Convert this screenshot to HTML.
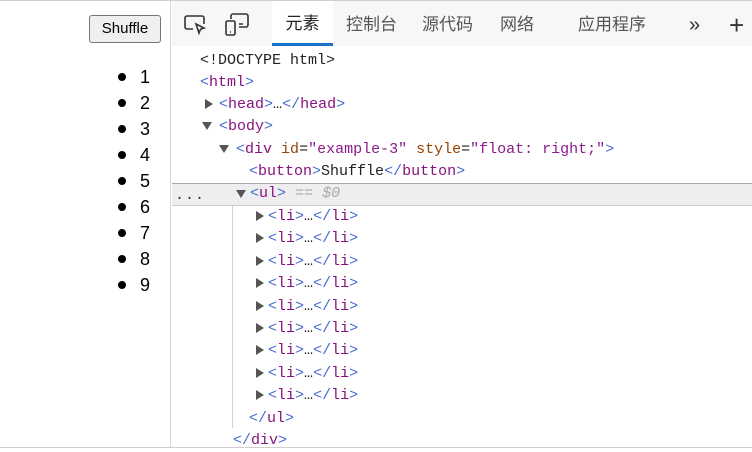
<!DOCTYPE html>
<html><head><style>
*{margin:0;padding:0;box-sizing:border-box}
body{width:752px;height:449px;overflow:hidden;background:#fff;position:relative;font-family:"Liberation Sans",sans-serif}
.top{position:absolute;left:0;top:0;width:752px;height:1px;background:#cfcfcf}
.bot{position:absolute;left:0;top:447px;width:752px;height:1px;background:#cfcfcf}
.left{position:absolute;left:0;top:1px;width:171px;height:446px;border-right:1px solid #d6d6d6}
.btn{position:absolute;left:89px;top:14px;width:72px;height:28px;border:1px solid #767676;border-radius:3px;background:#efefef;font-size:15px;text-align:center;line-height:26px;color:#000}
.list{position:absolute;left:118px;top:64px;font-size:18px;line-height:26px}
.list div{position:relative;padding-left:22px}
.list div:before{content:"";position:absolute;left:0;top:9px;width:8px;height:8px;border-radius:50%;background:#000}
.tb{position:absolute;left:172px;top:1px;width:580px;height:45px;background:#f7f7f7}
.tab{position:absolute;top:0;height:45px;line-height:48px;font-size:17px;color:#555;font-family:"Liberation Sans","Noto Sans CJK SC",sans-serif}
.act{background:#fff;color:#222;border-bottom:3px solid #1a73c9;line-height:45px;text-align:center}
.code{position:absolute;font-family:"Liberation Mono",monospace;font-size:15px;white-space:pre;line-height:22px;color:#222;margin-top:1px}
.b{color:#4a6ad0}.t{color:#881280}.a{color:#994500}.v{color:#8b1a8b}.g{color:#aaa;font-style:italic}
.tri{position:absolute;width:0;height:0}
.tr{border-top:5px solid transparent;border-bottom:5px solid transparent;border-left:8px solid #555}
.td{border-left:5px solid transparent;border-right:5px solid transparent;border-top:8px solid #555}
.sel{position:absolute;left:172px;top:183px;width:580px;height:23px;background:#eeeef0;border-top:1px solid #aaa;border-bottom:1px solid #ccc}
.vl{position:absolute;left:232px;top:206px;width:1px;height:222px;background:#c5d1ea}
</style></head><body>
<div class="top"></div>
<div class="left">
<div class="btn">Shuffle</div>
</div>
<div class="list"><div>1</div><div>2</div><div>3</div><div>4</div><div>5</div><div>6</div><div>7</div><div>8</div><div>9</div></div>
<div class="tb">
<svg style="position:absolute;left:12px;top:14px" width="24" height="20" viewBox="0 0 24 20" fill="none" stroke="#333" stroke-width="1.6"><path d="M9 14H3a2 2 0 0 1-2-2V3a2 2 0 0 1 2-2h15a2 2 0 0 1 2 2v6"/><path d="M12 9l8 4-3.5 1.2L15 18z" fill="#fff"/></svg>
<svg style="position:absolute;left:52px;top:12px" width="26" height="24" viewBox="0 0 26 24" fill="none" stroke="#333" stroke-width="1.6"><path d="M7 6V3a2 2 0 0 1 2-2h13a2 2 0 0 1 2 2v9a2 2 0 0 1-2 2h-7"/><rect x="2" y="8" width="9" height="14" rx="1.5"/><path d="M6 19h1M15 11h4"/></svg>
<div class="tab act" style="left:100px;width:61px">元素</div>
<div class="tab" style="left:174px">控制台</div>
<div class="tab" style="left:250px">源代码</div>
<div class="tab" style="left:328px">网络</div>
<div class="tab" style="left:406px">应用程序</div>
<div class="tab" style="left:517px;font-size:20px;color:#333">»</div>
<div class="tab" style="left:557px;font-size:26px;color:#333;font-weight:300">+</div>
</div>
<div class="sel"></div>
<div class="vl"></div>
<div class="code" style="left:175px;top:184px;color:#333;letter-spacing:1px">...</div>
<div class="code" style="left:200px;top:49px">&lt;!DOCTYPE html&gt;</div>
<div class="code" style="left:200px;top:71px"><span class="b">&lt;</span><span class="t">html</span><span class="b">&gt;</span></div>
<div class="tri tr" style="left:205px;top:99px"></div>
<div class="code" style="left:219px;top:93px"><span class="b">&lt;</span><span class="t">head</span><span class="b">&gt;</span>…<span class="b">&lt;/</span><span class="t">head</span><span class="b">&gt;</span></div>
<div class="tri td" style="left:202px;top:122px"></div>
<div class="code" style="left:219px;top:115px"><span class="b">&lt;</span><span class="t">body</span><span class="b">&gt;</span></div>
<div class="tri td" style="left:219px;top:145px"></div>
<div class="code" style="left:236px;top:138px"><span class="b">&lt;</span><span class="t">div</span> <span class="a">id</span>=<span class="v">"example-3"</span> <span class="a">style</span>=<span class="v">"float: right;"</span><span class="b">&gt;</span></div>
<div class="code" style="left:249px;top:160px"><span class="b">&lt;</span><span class="t">button</span><span class="b">&gt;</span>Shuffle<span class="b">&lt;/</span><span class="t">button</span><span class="b">&gt;</span></div>
<div class="tri td" style="left:236px;top:190px"></div>
<div class="code" style="left:250px;top:182px"><span class="b">&lt;</span><span class="t">ul</span><span class="b">&gt;</span> <span class="g">== $0</span></div>
<div class="tri tr" style="left:256px;top:211px"></div><div class="code" style="left:268px;top:205px"><span class="b">&lt;</span><span class="t">li</span><span class="b">&gt;</span>…<span class="b">&lt;/</span><span class="t">li</span><span class="b">&gt;</span></div>
<div class="tri tr" style="left:256px;top:233px"></div><div class="code" style="left:268px;top:227px"><span class="b">&lt;</span><span class="t">li</span><span class="b">&gt;</span>…<span class="b">&lt;/</span><span class="t">li</span><span class="b">&gt;</span></div>
<div class="tri tr" style="left:256px;top:256px"></div><div class="code" style="left:268px;top:250px"><span class="b">&lt;</span><span class="t">li</span><span class="b">&gt;</span>…<span class="b">&lt;/</span><span class="t">li</span><span class="b">&gt;</span></div>
<div class="tri tr" style="left:256px;top:278px"></div><div class="code" style="left:268px;top:272px"><span class="b">&lt;</span><span class="t">li</span><span class="b">&gt;</span>…<span class="b">&lt;/</span><span class="t">li</span><span class="b">&gt;</span></div>
<div class="tri tr" style="left:256px;top:301px"></div><div class="code" style="left:268px;top:295px"><span class="b">&lt;</span><span class="t">li</span><span class="b">&gt;</span>…<span class="b">&lt;/</span><span class="t">li</span><span class="b">&gt;</span></div>
<div class="tri tr" style="left:256px;top:323px"></div><div class="code" style="left:268px;top:317px"><span class="b">&lt;</span><span class="t">li</span><span class="b">&gt;</span>…<span class="b">&lt;/</span><span class="t">li</span><span class="b">&gt;</span></div>
<div class="tri tr" style="left:256px;top:345px"></div><div class="code" style="left:268px;top:339px"><span class="b">&lt;</span><span class="t">li</span><span class="b">&gt;</span>…<span class="b">&lt;/</span><span class="t">li</span><span class="b">&gt;</span></div>
<div class="tri tr" style="left:256px;top:368px"></div><div class="code" style="left:268px;top:362px"><span class="b">&lt;</span><span class="t">li</span><span class="b">&gt;</span>…<span class="b">&lt;/</span><span class="t">li</span><span class="b">&gt;</span></div>
<div class="tri tr" style="left:256px;top:390px"></div><div class="code" style="left:268px;top:384px"><span class="b">&lt;</span><span class="t">li</span><span class="b">&gt;</span>…<span class="b">&lt;/</span><span class="t">li</span><span class="b">&gt;</span></div>
<div class="code" style="left:249px;top:407px"><span class="b">&lt;/</span><span class="t">ul</span><span class="b">&gt;</span></div>
<div class="code" style="left:233px;top:429px"><span class="b">&lt;/</span><span class="t">div</span><span class="b">&gt;</span></div>
<div class="bot"></div>
</body></html>
